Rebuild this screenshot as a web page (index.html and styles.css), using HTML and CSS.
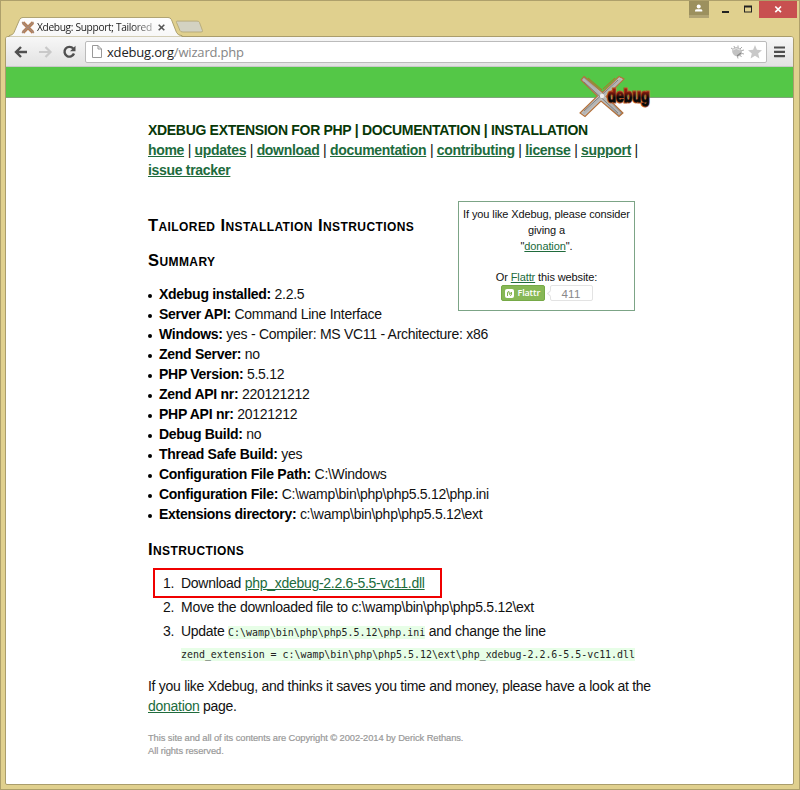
FILE: index.html
```html
<!DOCTYPE html>
<html lang="en">
<head>
<meta charset="utf-8">
<title>Xdebug: Support; Tailored Installation Instructions</title>
<link rel="stylesheet" href="styles.css">
</head>
<body>
<div class="window">
  <div class="titlebar">
    <svg class="tabs" width="210" height="20" viewBox="0 0 210 22" preserveAspectRatio="none">
      <defs>
        <linearGradient id="tabFill" x1="0" y1="0" x2="0" y2="1"><stop offset="0" stop-color="#fefefe"/><stop offset="1" stop-color="#f7f7f7"/></linearGradient>
      </defs>
      <path d="M0 22 L0 20.5 Q4 20 5 17 L10.500 3 Q11.500 .5 14 .5 H159 Q161.500 .5 162.500 3 L167.500 17 Q169 20.500 173 20.500 V22Z" fill="url(#tabFill)" stroke="#a99d6c"/>
      <path d="M168 4.500 H188 Q190 4.500 190.500 6 L193.500 15 Q194 16.500 192 16.500 H174 Q171.500 16.500 171 15 L167.500 6 Q167 4.500 168 4.500Z" fill="#d3d2c2" stroke="#b7ab7b"/>
    </svg>
    <div class="tab-content">
      <svg width="14" height="13" viewBox="0 0 14 13"><path d="M2 1.500 L12 11.500 M12 1.500 L2 11.500" stroke="#b77d53" stroke-width="3.200"/><path d="M1 1 L13 12 M12.500 1 L1 12" stroke="#a58a78" stroke-width="1.300"/></svg>
      <span class="tab-title">Xdebug: Support; Tailored</span>
      <svg width="7" height="7" viewBox="0 0 7 7"><path d="M.7 .7 L6.300 6.300 M6.300 .7 L.7 6.300" stroke="#555" stroke-width="1.600"/></svg>
    </div>
    <div class="controls">
      <div class="user"><svg width="20" height="17" viewBox="0 0 20 17"><rect y="14" width="20" height="3" fill="#b1a474"/><circle cx="9.700" cy="5.500" r="2" fill="#fff"/><path d="M6 10.500 V9.500 Q6 8.200 8 8.200 H11.500 Q13.300 8.200 13.300 9.500 V10.500Z" fill="#fff"/></svg></div>
      <svg class="minmax" width="50" height="17" viewBox="0 0 50 17"><path d="M13 11 H20" stroke="#222" stroke-width="2"/><rect x="35.500" y="5.500" width="7" height="5.500" fill="none" stroke="#222"/><path d="M35 5.500H43" stroke="#222" stroke-width="2"/></svg>
      <div class="close"><svg width="38" height="17" viewBox="0 0 38 17"><path d="M16.300 5.500 L22 11.200 M22 5.500 L16.300 11.200" stroke="#fff" stroke-width="1.700"/></svg></div>
    </div>
  </div>
  <div class="browser">
    <div class="toolbar">
      <svg class="nav-icons" width="79" height="30" viewBox="0 0 79 30">
        <path d="M21 15 H10.500 M15 10 L10 15 L15 20" fill="none" stroke="#505050" stroke-width="2.400"/>
        <path d="M33 15 H44 M39.500 10 L44.500 15 L39.500 20" fill="none" stroke="#c9c9c9" stroke-width="2.200"/>
        <path d="M67.200 11.600 A4.900 4.900 0 1 0 68 16.500" fill="none" stroke="#505050" stroke-width="2.400"/>
        <path d="M69.500 8.800 V14.300 H64Z" fill="#505050"/>
      </svg>
      <div class="address">
        <svg width="10" height="13" viewBox="0 0 10 13"><path d="M.5 .5 H6 L9.500 4 V12.500 H.5Z M6 .5 V4 H9.500" fill="#fff" stroke="#999"/></svg>
        <span class="url">xdebug.org<span class="path">/wizard.php</span></span>
        <svg class="bug" width="14" height="14" viewBox="0 0 14 14"><g stroke="#aaa" stroke-width="1" fill="none"><path d="M1 3 L4 5 M4 1 L5 4 M8 .5 L8 4 M12 2 L9 5 M14 5 L10 6 M14 9 L10 8 M11.500 12 L9 9 M8 13.500 L7 10"/></g><ellipse cx="7" cy="6.800" rx="5.200" ry="4.500" transform="rotate(35 7 7)" fill="#c2c2c2"/><path d="M3 5 Q6 2 10 5" stroke="#e6e6e6" fill="none"/><path d="M7 11 L11 8" stroke="#888" stroke-width="1.300"/></svg>
        <svg width="14" height="14" viewBox="0 0 14 14"><path d="M7 0 L8.900 4.700 L14 5.200 L10.200 8.500 L11.400 13.600 L7 10.800 L2.600 13.600 L3.800 8.500 L0 5.200 L5.100 4.700Z" fill="#c8c8c8"/></svg>
      </div>
      <svg class="menu" width="11" height="12" viewBox="0 0 11 12"><path d="M.5 1.500H10.500M.5 5.800H10.500M.5 10.100H10.500" stroke="#4d4d4d" stroke-width="2.200" stroke-linecap="round"/></svg>
    </div>
    <div class="page">
      <div class="banner">
        <svg class="logo" width="76" height="44" viewBox="0 0 76 44">
          <defs>
            <linearGradient id="metal" x1="0" y1="0" x2="1" y2="1"><stop offset="0" stop-color="#888"/><stop offset=".5" stop-color="#c5c5c5"/><stop offset="1" stop-color="#888"/></linearGradient>
            <linearGradient id="ember" x1="0" y1="0" x2="0" y2="1"><stop offset="0" stop-color="#c02815"/><stop offset=".35" stop-color="#80180c"/><stop offset=".6" stop-color="#080808"/><stop offset="1" stop-color="#080808"/></linearGradient>
          </defs>
          <path d="M7 1.500 L25.500 17.500 L42 1.500 L47 4 L29 21.500 L46 38 L42 41.500 L24 26 L8 41.500 L3 38 L20.500 21 L4 5Z" fill="url(#metal)" stroke="#b5713a" stroke-width="1.100"/>
          <path d="M6 4 L43 39 M44 4 L6 39" stroke="#b4b4b4" stroke-width="2.500"/>
          <path d="M11 3 L25 15 M38 3 L26 14" stroke="#b86a28"/>
          <path d="M7 7 L41 38 M41 5 L7 36" stroke="#7c7976" stroke-width=".9"/>
          <circle cx="25" cy="21" r="2.200" fill="#eee"/>
          <text x="30.500" y="27" class="logo-text logo-glow" textLength="42" lengthAdjust="spacingAndGlyphs">debug</text>
          <text x="30.500" y="27" class="logo-text" textLength="42" lengthAdjust="spacingAndGlyphs">debug</text>
        </svg>
      </div>
      <div class="content">
        <div class="site-title">XDEBUG EXTENSION FOR PHP | DOCUMENTATION | INSTALLATION</div>
        <div class="site-nav"><a>home</a> | <a>updates</a> | <a>download</a> | <a>documentation</a> | <a>contributing</a> | <a>license</a> | <a>support</a> |<br><a>issue tracker</a></div>
        <aside class="donate">
          <div>If you like Xdebug, please consider</div>
          <div>giving a</div>
          <div>"<a>donation</a>".</div>
          <div class="flattr-line">Or <a>Flattr</a> this website:</div>
          <div class="flattr">
            <span class="flattr-button"><svg width="9" height="9" viewBox="0 0 9 9"><rect width="9" height="9" rx="2" fill="#fff"/><path d="M2.500 7 V4 Q2.500 2.500 4 2.500 L4.500 5.500 L6.500 3 V5 Q6.500 6.500 5 6.500" stroke="#83b44e" stroke-width="1" fill="none"/></svg>Flattr</span>
            <span class="count">411</span>
          </div>
        </aside>
        <h1>Tailored Installation Instructions</h1>
        <h2>Summary</h2>
        <ul class="summary">
          <li><b>Xdebug installed:</b> 2.2.5</li>
          <li><b>Server API:</b> Command Line Interface</li>
          <li><b>Windows:</b> yes - Compiler: MS VC11 - Architecture: x86</li>
          <li><b>Zend Server:</b> no</li>
          <li><b>PHP Version:</b> 5.5.12</li>
          <li><b>Zend API nr:</b> 220121212</li>
          <li><b>PHP API nr:</b> 20121212</li>
          <li><b>Debug Build:</b> no</li>
          <li><b>Thread Safe Build:</b> yes</li>
          <li><b>Configuration File Path:</b> C:\Windows</li>
          <li><b>Configuration File:</b> C:\wamp\bin\php\php5.5.12\php.ini</li>
          <li><b>Extensions directory:</b> c:\wamp\bin\php\php5.5.12\ext</li>
        </ul>
        <h2 class="instructions-title">Instructions</h2>
        <ol class="steps">
          <li class="marked"><span class="num">1.</span><span>Download <a>php_xdebug-2.2.6-5.5-vc11.dll</a></span></li>
          <li><span class="num">2.</span><span>Move the downloaded file to c:\wamp\bin\php\php5.5.12\ext</span></li>
          <li><span class="num">3.</span><span>Update <code>C:\wamp\bin\php\php5.5.12\php.ini</code> and change the line<br><code>zend_extension = c:\wamp\bin\php\php5.5.12\ext\php_xdebug-2.2.6-5.5-vc11.dll</code></span></li>
        </ol>
        <p class="closing">If you like Xdebug, and thinks it saves you time and money, please have a look at the<br><a>donation</a> page.</p>
        <footer>This site and all of its contents are Copyright © 2002-2014 by Derick Rethans.<br>All rights reserved.</footer>
      </div>
    </div>
  </div>
</div>
</body>
</html>
```
FILE: styles.css
```css
* { box-sizing: border-box; }
body { margin: 0; }
.window {
  width: 800px; height: 790px; padding: 0 5px 4px 4px;
  display: flex; flex-direction: column;
  background: #e0d08e; border: 1px solid #aea06b;
}
.titlebar { height: 35px; display: flex; position: relative; flex: none; }
.tabs { margin: 16px 0 0 4px; position: relative; z-index: 2; }
.tab-content {
  position: absolute; left: 16px; top: 19px; z-index: 3;
  display: flex; align-items: center; height: 14px;
}
.tab-title {
  font: 10.2px/14px "Open Sans", sans-serif; letter-spacing: -.34px; white-space: nowrap;
  width: 118px; margin: 0 3px 0 2px; color: #222;
  -webkit-mask-image: linear-gradient(90deg, #000 80%, rgba(0,0,0,.3));
}
.controls { margin-left: auto; display: flex; height: 17px; margin-right: -3px; }
.controls svg { display: block; }
.user { background: #9c905e; width: 20px; }
.close { background: #c85050; width: 38px; }
.browser {
  flex: 1; display: flex; flex-direction: column; background: #fff;
  border: 1px solid #aa9d6c; border-radius: 3px 3px 2px 2px; overflow: hidden;
}
.toolbar {
  height: 30px; flex: none; display: flex; align-items: center;
  background: linear-gradient(#f7f7f7, #e2e2e2); border-bottom: 1px solid #c9c9c9;
}
.address {
  width: 682px; height: 22px; background: #fff; border: 1px solid #bbb; border-radius: 2px;
  display: flex; align-items: center; padding: 0 4px 0 6px; flex: none;
}
.nav-icons, .menu { flex: none; }
.url { font: 13px/20px "Open Sans", sans-serif; letter-spacing: -.18px; color: #222; margin-left: 5px; }
.path { color: #858585; }
.bug { margin: 0 4px 0 auto; }
.menu { margin-left: 7px; }
.page { flex: 1; }
.banner {
  height: 31px; background: #54c747; border-bottom: 1px solid #80a57c;
  padding: 8px 0 0 571px;
}
.logo { display: block; position: relative; overflow: visible; }
.logo-text {
  font: bold 19px "Liberation Sans", sans-serif;
  fill: url(#ember); stroke: url(#ember); stroke-width: .9px;
}
.logo-glow { stroke: #b9592c; stroke-width: 3px; }
.content {
  margin: 22px 0 0 142px; width: 504px;
  font: 14px/20px "Liberation Sans", Arial, sans-serif; letter-spacing: -.28px; color: #111; white-space: nowrap;
}
a { color: #206b3c; text-decoration: underline; }
.site-title, .site-nav a { font-weight: bold; }
.site-title { color: #083808; letter-spacing: -.31px; }
.site-nav { letter-spacing: -.31px; }
.donate {
  float: right; width: 177px; height: 110px; margin: 21px 17px 0 0; padding: 4px 0 0;
  border: 1px solid #7ca486; text-align: center; font-size: 11px; line-height: 16px; letter-spacing: -.11px;
}
.flattr-line { margin-top: 15px; }
.flattr { display: flex; justify-content: center; gap: 5px; }
.flattr-button {
  width: 44px; height: 16px; border: 1px solid #76a947; border-radius: 2px; background: #87b856;
  color: #fff; font: 600 9px/14px "Open Sans", sans-serif; letter-spacing: -.15px;
  display: flex; align-items: center; gap: 4px; padding-left: 3px;
}
.count {
  position: relative; width: 43px; height: 16px; border: 1px solid #e3e3e3; border-radius: 2px;
  font-size: 11.500px; line-height: 17px; color: #888; letter-spacing: .3px;
}
.count::before {
  content: ""; position: absolute; left: -3px; top: 5px; width: 4px; height: 4px;
  border: 1px solid #e3e3e3; border-width: 0 0 1px 1px; background: #fff; transform: rotate(45deg);
}
h1, h2 {
  font-size: 16.500px; line-height: 20px; font-variant: small-caps; font-weight: bold;
  letter-spacing: .42px; margin: 0; color: #000;
}
h1 { padding-top: 35px; }
h2 { margin-top: 15px; }
ul.summary { list-style: none; margin: 14px 0 0; padding: 0; }
.summary li { padding-left: 11px; position: relative; }
.summary li::before {
  content: ""; position: absolute; left: 0; top: 10px; width: 4px; height: 4px; border-radius: 50%; background: #000;
}
.summary b { color: #000; }
ol.steps { list-style: none; margin: 9px 0 0 5px; padding: 0; }
.steps li { display: flex; padding-left: 10px; line-height: 22px; margin-bottom: 2px; }
.steps .num { width: 18px; }
.steps li.marked { width: 289px; height: 30px; border: 2px solid #f00000; padding: 2px 0 0 8px; margin-bottom: -2px; }
code { font: 9.93px/14px "DejaVu Sans Mono", monospace; letter-spacing: 0; background: #e7fee7; color: #222; padding: 1px 0; }
.closing { margin: 12px 0 0; }
footer {
  margin-top: 16px; font-size: 9.33px; line-height: 13.3px; letter-spacing: -.08px; color: #999;
  -webkit-text-stroke: .2px #999;
}
```
